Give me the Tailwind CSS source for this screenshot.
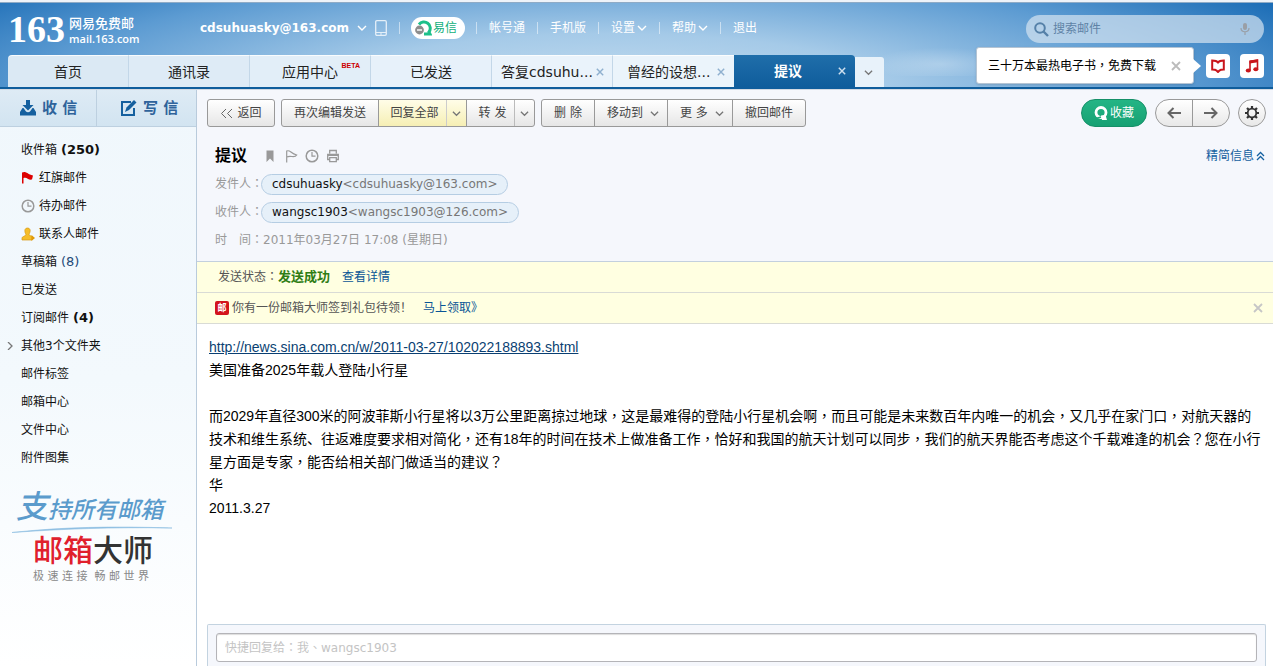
<!DOCTYPE html>
<html lang="zh-CN">
<head>
<meta charset="utf-8">
<meta name="viewport" content="width=device-width, initial-scale=1">
<title>网易免费邮 - 提议</title>
<script src="https://cdn.jsdelivr.net/npm/@tailwindcss/browser@4"></script>
</head>
<body class="flex min-h-screen flex-col bg-white font-['DejaVu_Sans','Noto_Sans_CJK_SC',sans-serif] text-[12px] leading-5 text-[#222]">
<svg class="hidden" aria-hidden="true">
  <symbol id="down" viewBox="0 0 10 10"><path d="M1 3l4 4 4-4" fill="none" stroke="currentColor" stroke-width="1.4"/></symbol>
  <symbol id="x" viewBox="0 0 10 10"><path d="M1 1l8 8M9 1L1 9" fill="none" stroke="currentColor" stroke-width="1.8"/></symbol>
  <symbol id="clock" viewBox="0 0 14 14"><circle cx="7" cy="7" r="5.8" fill="none" stroke="currentColor" stroke-width="1.5"/><path d="M7 3v4.2h3.5" fill="none" stroke="currentColor" stroke-width="1.2"/></symbol>
</svg>

<header class="relative border-b-2 border-[#0f5d9c] bg-[radial-gradient(ellipse_62%_175%_at_48%_100%,#c3dcef_0%,#a5cae8_35%,#5c9bd2_72%,#1c6db6_100%)]">
  <div class="h-[3px] border-b border-[#8fabc6] bg-[#eef3f9]"></div>
  <!-- wispy clouds behind the search area -->
  <div class="absolute top-[46px] right-[280px] h-[30px] w-[130px] bg-[radial-gradient(ellipse_at_60%_60%,rgba(255,255,255,.25),transparent_65%)]"></div>
  <div class="relative flex h-[52px] items-start text-white">
    <a href="#" class="flex h-[52px] w-[200px] shrink-0 items-center gap-1 pl-2">
      <span class="font-['Liberation_Serif',serif] text-[38px] leading-[52px] font-bold">163</span>
      <span class="flex flex-col pt-1">
        <span class="text-[13px] leading-[15px] font-medium">网易免费邮</span>
        <span class="font-['Open_Sans',sans-serif] text-[11px] leading-[15px] font-semibold">mail.163.com</span>
      </span>
    </a>
    <nav class="flex h-[49px] items-center whitespace-nowrap">
      <button class="flex items-center gap-2 text-[12px] font-bold">cdsuhuasky@163.com <svg class="size-[10px]"><use href="#down"/></svg></button>
      <svg class="mr-3 ml-2 h-4 w-3" viewBox="0 0 12 16"><rect x=".7" y=".7" width="10.6" height="14.6" rx="1.2" fill="none" stroke="#e4eff8" stroke-width="1.3"/><path d="M1 12.5h10M5 14h2" stroke="#e4eff8"/></svg>
      <span class="h-3 w-px bg-white/50"></span>
      <a href="#" class="mx-[11px] flex h-[22px] items-center gap-px rounded-full bg-white pr-2 pl-1 text-[#12b07c]">
        <svg class="h-4 w-[17px]" viewBox="0 0 17 16"><path d="M4 4.5A6 6 0 1 1 14 12l1 2H9" fill="none" stroke="#1cc08a" stroke-width="3"/><circle cx="4.5" cy="10" r="4.4" fill="#8d8d8d"/><path d="M2 10h5" stroke="#fff" stroke-width="1.4"/></svg>易信</a>
      <span class="h-3 w-px bg-white/50"></span>
      <a href="#" class="px-3">帐号通</a><span class="h-3 w-px bg-white/50"></span>
      <a href="#" class="px-3">手机版</a><span class="h-3 w-px bg-white/50"></span>
      <button class="flex items-center gap-[2px] px-3">设置<svg class="size-[10px]"><use href="#down"/></svg></button><span class="h-3 w-px bg-white/50"></span>
      <button class="flex items-center gap-[2px] px-3">帮助<svg class="size-[10px]"><use href="#down"/></svg></button><span class="h-3 w-px bg-white/50"></span>
      <a href="#" class="px-3">退出</a>
    </nav>
    <label class="mt-3 mr-[9px] ml-auto flex h-7 w-[238px] items-center gap-1 rounded-full bg-[#d5e4f1]/70 px-2 text-[#5f87ab]">
      <svg class="size-[15px] shrink-0" viewBox="0 0 15 15"><circle cx="6" cy="6" r="4.8" fill="none" stroke="#5580a8" stroke-width="2"/><path d="M9.5 9.5l4.5 4.5" stroke="#5580a8" stroke-width="2.4"/></svg>
      <input type="text" aria-label="搜索邮件" placeholder="搜索邮件" class="min-w-0 flex-1 bg-transparent outline-none placeholder:text-[#5f83a6]">
      <svg class="mr-1 h-3 w-[14px]" viewBox="0 0 14 12"><rect x="5" y="0" width="4" height="7" rx="2" fill="#9a9fa6"/><path d="M3 5c0 5 8 5 8 0M7 9v3" fill="none" stroke="#9a9fa6" stroke-width="1.2"/></svg>
    </label>
  </div>

  <nav class="relative flex h-8 items-end pl-2 text-[14px] text-[#222]">
    <a href="#" class="flex h-full w-[121px] items-center justify-center rounded-tl-[4px] border-t border-r border-white/80 border-r-[#c3d7e8] bg-[#dbe9f4]">首页</a>
    <a href="#" class="flex h-full w-[121px] items-center justify-center border-t border-r border-white/80 border-r-[#c3d7e8] bg-[#deebf6]">通讯录</a>
    <a href="#" class="relative flex h-full w-[121px] items-center justify-center border-t border-r border-white/80 border-r-[#c3d7e8] bg-[#e2eef8]">应用中心<span class="absolute top-[5px] right-[10px] font-['Liberation_Sans',sans-serif] text-[7px] leading-[9px] font-bold text-[#c00]">BETA</span></a>
    <a href="#" class="flex h-full w-[121px] items-center justify-center border-t border-r border-white/80 border-r-[#c3d7e8] bg-[#e7f1fa]">已发送</a>
    <div class="flex h-full w-[121px] items-center justify-between border-t border-r border-white/80 border-r-[#c3d7e8] bg-[#eaf3fb] pr-2 pl-[9px] whitespace-nowrap"><a href="#">答复cdsuhu...</a><button aria-label="关闭" class="text-[#8fb0cf]"><svg class="size-2"><use href="#x"/></svg></button></div>
    <div class="flex h-full w-[121px] items-center justify-between border-t border-white/80 bg-[#ebf4fb] pr-[9px] pl-[14px] whitespace-nowrap"><a href="#">曾经的设想...</a><button aria-label="关闭" class="text-[#8fb0cf]"><svg class="size-2"><use href="#x"/></svg></button></div>
    <div class="flex h-full w-[121px] items-center rounded-tr-[4px] bg-linear-to-b from-[#1f6eaa] to-[#0f5d9c] pr-[9px] font-bold text-white"><a href="#" class="flex-1 pl-1 text-center">提议</a><button aria-label="关闭" class="text-[#cfe0ef]"><svg class="size-2"><use href="#x"/></svg></button></div>
    <button aria-label="更多标签" class="flex h-[30px] w-[29px] items-center justify-center rounded-tr-[3px] bg-[#e8f2fa] pr-[2px] text-[#777]"><svg class="size-[9px]"><use href="#down"/></svg></button>
  </nav>

  <div class="absolute top-[47px] right-[9px] flex items-center">
    <div class="relative flex h-[37px] w-[218px] items-center justify-between rounded-[3px] border border-[#b5c4d3] bg-white pr-3 pl-[11px] shadow-sm">
      <a href="#" class="text-black">三十万本最热电子书<span lang="zh-TW" class="font-['Noto_Sans_CJK_TC'] leading-none">，</span>免费下载</a>
      <button aria-label="关闭提示" class="text-[#bbb]"><svg class="size-[10px]"><use href="#x"/></svg></button>
      <svg class="absolute top-[10px] -right-2 h-4 w-[9px]" viewBox="0 0 9 16"><path d="M0 0l9 8-9 8z" fill="#fff"/></svg>
    </div>
    <button aria-label="阅读" class="ml-3 flex size-6 items-center justify-center rounded-[4px] bg-white"><svg class="h-[14px] w-[14px]" viewBox="0 0 14 14"><path d="M1.2 1.5c2.300 0 4.500.3 5.800 2 1.300-1.700 3.500-2 5.800-2v9c-2 0-3.500.2-4.300 1L7 13l-1.500-1.500c-.8-.8-2.300-1-4.300-1z" fill="none" stroke="#c9151b" stroke-width="2"/></svg></button>
    <button aria-label="音乐" class="ml-[10px] flex size-6 items-center justify-center rounded-[4px] bg-white"><svg class="h-[14px] w-[14px]" viewBox="0 0 14 14"><path d="M5 11.500V2.500l7.500-1.300v8.800" fill="none" stroke="#c9151b" stroke-width="1.6"/><path d="M4.500 1.500l8.500-1.300v3L4.500 4.600z" fill="#c9151b"/><ellipse cx="3.300" cy="11.500" rx="2.600" ry="2" fill="#c9151b"/><ellipse cx="10.800" cy="10.300" rx="2.500" ry="2" fill="#c9151b"/></svg></button>
  </div>
</header>

<div class="flex flex-1 border-t border-[#d3dae3]">
  <aside class="flex w-[197px] shrink-0 flex-col border-r border-[#b9cbdc] bg-linear-to-b from-[#f0f7fc] via-[#f3f9fd] to-white">
    <div class="flex h-[37px] border-b border-[#bdd0e0] bg-linear-to-b from-[#deebf5] to-[#d2e4f1] text-[15px] font-bold text-[#2f639b]">
      <button class="flex w-[97px] items-center gap-[6px] border-r border-[#bdd0e0] pl-5"><svg class="h-4 w-4" viewBox="0 0 16 16"><path d="M6 0h4v5h3.500L8 10.500 2.500 5H6z" fill="#15609f"/><path d="M2.500 8L0 12v3.500h16V12l-2.500-4h-1L10 11.500c-1 1-3 1-4 0L3.500 8z" fill="#15609f"/></svg>收 信</button>
      <button class="flex flex-1 items-center gap-[6px] pl-6"><svg class="h-4 w-4" viewBox="0 0 16 16"><path d="M10 2H1v13h12V8" fill="none" stroke="#15609f" stroke-width="2"/><path d="M13 0l2.500 2.500L8 10l-4 2 1.500-4.500z" fill="#15609f"/></svg>写 信</button>
    </div>
    <nav class="flex flex-col pt-[9px] text-[#111]">
      <a href="#" class="flex h-7 items-center gap-1 pl-[21px]">收件箱 <b class="text-[13px]">(250)</b></a>
      <a href="#" class="flex h-7 items-center gap-1 pl-[21px]"><svg class="size-[14px]" viewBox="0 0 14 14"><path d="M1 1.500c4-2 5 1.500 11 3l-1 4C7 9.500 6 5.500 2.500 7V12.500H1z" fill="#d00"/></svg>红旗邮件</a>
      <a href="#" class="flex h-7 items-center gap-1 pl-[21px]"><svg class="size-[14px] text-[#999]"><use href="#clock"/></svg>待办邮件</a>
      <a href="#" class="flex h-7 items-center gap-1 pl-[21px]"><svg class="size-[14px]" viewBox="0 0 14 14"><path d="M6.500 1C9 1 9.500 3 9 5c-.5 1.500-1 2-1 3l3 1.500V13H1v-2.500l4-2.500c0-1-.8-1.500-1-3C3.500 3 4 1 6.500 1z" fill="#f5bd28" stroke="#d99a10" stroke-width=".7"/><path d="M10.500 8l3.500 3-3.500 3z" fill="#e09a08"/></svg>联系人邮件</a>
      <a href="#" class="flex h-7 items-center gap-1 pl-[21px]">草稿箱 <span class="text-[13px] text-[#234a78]">(8)</span></a>
      <a href="#" class="flex h-7 items-center pl-[21px]">已发送</a>
      <a href="#" class="flex h-7 items-center gap-1 pl-[21px]">订阅邮件 <b class="text-[13px]">(4)</b></a>
      <a href="#" class="flex h-7 items-center gap-[7px] pl-[6px]"><svg class="size-2" viewBox="0 0 8 8"><path d="M2 0l4 4-4 4" fill="none" stroke="#777" stroke-width="1.300"/></svg>其他3个文件夹</a>
      <a href="#" class="flex h-7 items-center pl-[21px]">邮件标签</a>
      <a href="#" class="flex h-7 items-center pl-[21px]">邮箱中心</a>
      <a href="#" class="flex h-7 items-center pl-[21px]">文件中心</a>
      <a href="#" class="flex h-7 items-center pl-[21px]">附件图集</a>
    </nav>
    <a href="#" class="mt-4 block whitespace-nowrap">
      <span class="flex items-baseline pl-4 text-[23px] leading-[38px] font-medium text-[#5b9bcc] italic"><span class="text-[32px]">支</span>持所有邮箱</span>
      <svg class="-mt-1 ml-3 h-2 w-[160px]" viewBox="0 0 160 8"><path d="M0 7.500C50 2 100 1 160 3 100 2 50 4 0 7.500z" fill="#8fbfe2" stroke="#8fbfe2" stroke-width=".6"/></svg>
      <span class="block pl-[33px] text-[30px] leading-[36px] font-medium text-[#333]"><span class="text-[#e0202c]">邮箱</span>大师</span>
      <span class="block pl-[33px] text-[11px] leading-4 text-[#888]">极 速 连 接 &nbsp;畅 邮 世 界</span>
    </a>
  </aside>

  <main class="flex min-w-0 flex-1 flex-col">
    <section class="border-b border-[#c3d0de] bg-[#f5f7fc] pb-[7px]">
      <div class="flex pt-[9px] pr-[7px] pb-[15px] pl-[10px] whitespace-nowrap text-[#444]">
        <button class="mr-[6px] h-7 w-[68px] rounded-[3px] border border-[#999] bg-linear-to-b from-white to-[#e6e6e6]"><svg class="mr-1 inline h-[9px] w-[13px]" viewBox="0 0 13 9"><path d="M6 0L1.500 4.500 6 9M12 0L7.500 4.500 12 9" fill="none" stroke="#666"/></svg>返回</button>
        <div class="mr-[6px] flex h-7 overflow-hidden rounded-[3px] border border-[#999] bg-linear-to-b from-white to-[#e6e6e6]">
          <button class="w-[97px] border-r border-[#999]">再次编辑发送</button>
          <button class="w-[68px] border-r border-[#ccc] bg-linear-to-b from-[#fffde8] to-[#f6efb4] pl-1">回复全部</button>
          <button aria-label="回复选项" class="flex w-[20px] items-center justify-center border-r border-[#999] bg-linear-to-b from-[#fffde8] to-[#f6efb4] text-[#777]"><svg class="size-[9px]"><use href="#down"/></svg></button>
          <button class="w-[48px] border-r border-[#bbb] pl-1">转 发</button>
          <button aria-label="转发选项" class="flex w-[19px] items-center justify-center text-[#777]"><svg class="size-[9px]"><use href="#down"/></svg></button>
        </div>
        <div class="flex h-7 overflow-hidden rounded-[3px] border border-[#999] bg-linear-to-b from-white to-[#e6e6e6]">
          <button class="w-[53px] border-r border-[#999]">删 除</button>
          <button class="flex w-[73px] items-center justify-between border-r border-[#999] pr-2 pl-3">移动到<svg class="size-[9px] text-[#777]"><use href="#down"/></svg></button>
          <button class="flex w-[65px] items-center justify-between border-r border-[#999] pr-2 pl-3">更 多<svg class="size-[9px] text-[#777]"><use href="#down"/></svg></button>
          <button class="w-[72px]">撤回邮件</button>
        </div>
        <button class="ml-auto flex h-7 w-[66px] items-center justify-center gap-[2px] rounded-full border border-[#169068] bg-linear-to-b from-[#24b585] to-[#17a173] text-white"><svg class="size-[14px]" viewBox="0 0 14 14"><circle cx="7" cy="6.500" r="5" fill="none" stroke="#fff" stroke-width="2.800"/><path d="M7 9.500l4.500-.5L13 14H8z" fill="#fff"/><path d="M2 12.500l5-1.500" stroke="#1ca97a" stroke-width="1.500"/></svg>收藏</button>
        <div class="ml-2 flex h-7 w-[75px] overflow-hidden rounded-full border border-[#999] bg-linear-to-b from-white to-[#e8e8e8]">
          <button aria-label="上一封" class="flex flex-1 items-center justify-center border-r border-[#999]"><svg class="h-3 w-[14px]" viewBox="0 0 14 12"><path d="M6.500 1l-5 5 5 5M1.500 6H14" fill="none" stroke="#666" stroke-width="2"/></svg></button>
          <button aria-label="下一封" class="flex flex-1 items-center justify-center"><svg class="h-3 w-[14px]" viewBox="0 0 14 12"><path d="M7.500 1l5 5-5 5M12.500 6H0" fill="none" stroke="#666" stroke-width="2"/></svg></button>
        </div>
        <button aria-label="设置" class="ml-2 flex size-7 items-center justify-center rounded-full border border-[#999] bg-linear-to-b from-white to-[#e8e8e8]"><svg class="size-4" viewBox="0 0 16 16" fill="none" stroke="#333"><circle cx="8" cy="8" r="4.300" stroke-width="1.800"/><path d="M8 1v2.500M8 12.500V15M1 8h2.500M12.500 8H15M3 3l2 2M11 11l2 2M13 3l-2 2M5 11l-2 2" stroke-width="2.200"/></svg></button>
      </div>

      <div class="flex h-7 items-center pr-2 pl-[18px]">
        <h1 class="text-[16px] font-bold text-black">提议</h1>
        <div class="ml-4 flex items-center gap-[7px] text-[#999]">
          <button aria-label="标签"><svg class="size-[14px]" viewBox="0 0 14 14"><path d="M3.500 1.500h7V13L7 9.500 3.500 13z" fill="currentColor"/></svg></button>
          <button aria-label="红旗"><svg class="size-[14px]" viewBox="0 0 14 14"><path d="M2.700 13.500V2c3.500-1.500 3.500 2 10 4-2 3.500-6 0-10 2" fill="none" stroke="currentColor" stroke-width="1.200"/></svg></button>
          <button aria-label="待办"><svg class="size-[14px]"><use href="#clock"/></svg></button>
          <button aria-label="打印"><svg class="size-[14px]" viewBox="0 0 14 14" fill="none" stroke="currentColor" stroke-width="1.300"><path d="M3.700 4.500v-3h6.600v3M3.500 10.500H1.700v-5h10.600v5h-1.800M3.700 8.700h6.600v4H3.700z"/><path d="M2 6h10" stroke-width="2"/></svg></button>
        </div>
        <a href="#" class="ml-auto flex items-center gap-[2px] text-[#1460a0]">精简信息<svg class="h-[10px] w-[9px]" viewBox="0 0 9 10"><path d="M1 5l3.500-3.500L8 5M1 9l3.500-3.500L8 9" fill="none" stroke="#1460a0" stroke-width="1.300"/></svg></a>
      </div>
      <dl class="pl-[18px] text-[#999]">
        <div class="flex h-7 items-center"><dt class="w-[46px] whitespace-nowrap">发件人<span lang="zh-TW" class="font-['Noto_Sans_CJK_TC'] leading-none">：</span></dt><dd class="h-[21px] rounded-full border border-[#b5cde3] bg-[#e6f0f9] px-[10px] text-[12px] leading-[19px] text-[#777]"><span class="text-[#111]">cdsuhuasky</span>&lt;cdsuhuasky@163.com&gt;</dd></div>
        <div class="flex h-7 items-center"><dt class="w-[46px] whitespace-nowrap">收件人<span lang="zh-TW" class="font-['Noto_Sans_CJK_TC'] leading-none">：</span></dt><dd class="h-[21px] rounded-full border border-[#b5cde3] bg-[#e6f0f9] px-[10px] text-[12px] leading-[19px] text-[#777]"><span class="text-[#111]">wangsc1903</span>&lt;wangsc1903@126.com&gt;</dd></div>
        <div class="flex h-7 items-center"><dt class="w-[48px] whitespace-nowrap">时　间<span lang="zh-TW" class="font-['Noto_Sans_CJK_TC'] leading-none">：</span></dt><dd>2011年03月27日 17:08 (星期日)</dd></div>
      </dl>
    </section>

    <div class="flex h-[31px] items-center gap-3 border-b border-[#d9dbd5] bg-[#ffffe1] pl-[21px] text-[#555]">
      <p>发送状态<span lang="zh-TW" class="font-['Noto_Sans_CJK_TC'] leading-none">：</span><b class="text-[13px] leading-none text-[#2f7d14]">发送成功</b></p><a href="#" class="text-[#0a5596]">查看详情</a>
    </div>
    <div class="flex h-[31px] items-center border-b border-[#d9dbd5] bg-[#ffffe1] pr-[10px] pl-[18px] text-[#555]">
      <span class="mr-[3px] flex size-[14px] items-center justify-center rounded-[2px] bg-[#d3141c] text-[9px] leading-none font-bold text-white">邮</span>
      <p>你有一份邮箱大师签到礼包待领！</p><a href="#" class="ml-[11px] text-[#0a5596]">马上领取》</a>
      <button aria-label="关闭" class="ml-auto text-[#c6c6c6]"><svg class="size-[10px]"><use href="#x"/></svg></button>
    </div>

    <article class="flex-1 px-3 pt-3 pb-6 font-['Liberation_Sans','Noto_Sans_CJK_SC',sans-serif] text-[14px] leading-[23px] text-black">
      <p><a href="#" class="text-[#0a3f72] underline">http://news.sina.com.cn/w/2011-03-27/102022188893.shtml</a></p>
      <p>美国准备2025年载人登陆小行星</p>
      <p class="mt-[23px]">而2029年直径300米的阿波菲斯小行星将以3万公里距离掠过地球<span lang="zh-TW" class="font-['Noto_Sans_CJK_TC'] leading-none">，</span>这是最难得的登陆小行星机会啊<span lang="zh-TW" class="font-['Noto_Sans_CJK_TC'] leading-none">，</span>而且可能是未来数百年内唯一的机会<span lang="zh-TW" class="font-['Noto_Sans_CJK_TC'] leading-none">，</span>又几乎在家门口<span lang="zh-TW" class="font-['Noto_Sans_CJK_TC'] leading-none">，</span>对航天器的技术和维生系统、往返难度要求相对简化<span lang="zh-TW" class="font-['Noto_Sans_CJK_TC'] leading-none">，</span>还有18年的时间在技术上做准备工作<span lang="zh-TW" class="font-['Noto_Sans_CJK_TC'] leading-none">，</span>恰好和我国的航天计划可以同步<span lang="zh-TW" class="font-['Noto_Sans_CJK_TC'] leading-none">，</span>我们的航天界能否考虑这个千载难逢的机会<span lang="zh-TW" class="font-['Noto_Sans_CJK_TC'] leading-none">？</span>您在小行星方面是专家<span lang="zh-TW" class="font-['Noto_Sans_CJK_TC'] leading-none">，</span>能否给相关部门做适当的建议<span lang="zh-TW" class="font-['Noto_Sans_CJK_TC'] leading-none">？</span></p>
      <p>华</p>
      <p>2011.3.27</p>
    </article>

    <form class="mr-[7px] ml-[10px] rounded-t-[2px] border border-b-0 border-[#c3d3e0] bg-[#f5f7fc] px-2 pt-2 pb-1">
      <input type="text" lang="zh-TW" aria-label="快捷回复" placeholder="快捷回复给：我、wangsc1903" class="block h-[29px] w-full rounded-[3px] border border-[#b4b4b8] bg-white px-2 font-['DejaVu_Sans','Noto_Sans_CJK_TC',sans-serif] text-[12px] shadow-[inset_0_1px_1px_#ddd] outline-none placeholder:text-[#c4c4c4]">
    </form>
  </main>
</div>
</body>
</html>
